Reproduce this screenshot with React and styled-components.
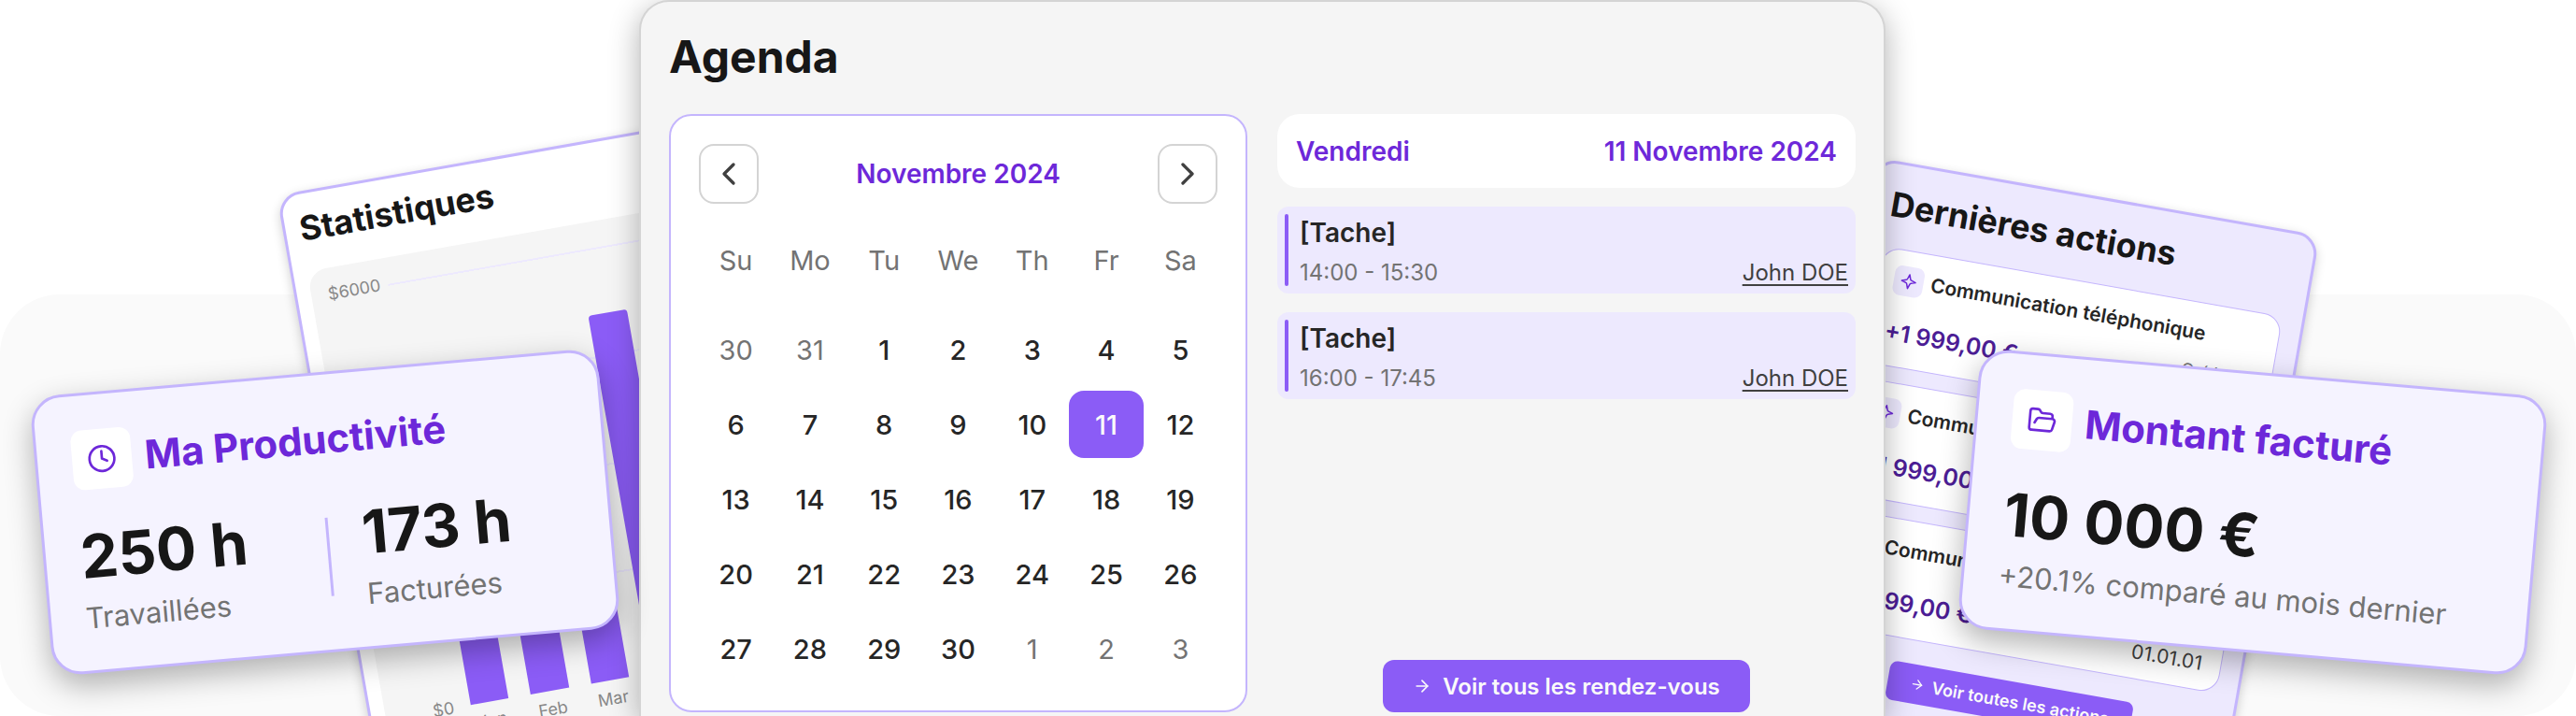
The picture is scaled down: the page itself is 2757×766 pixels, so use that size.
import React from "react";
import styled, { createGlobalStyle } from "styled-components";
import {
  ArrowRight,
  ChevronLeft,
  ChevronRight,
  Clock,
  FolderOpen,
} from "lucide-react";

const GlobalStyle = createGlobalStyle`
  *, *::before, *::after {
    box-sizing: border-box;
  }
  body {
    margin: 0;
    background: #fff;
    color: #171717;
    font-family: Inter, "Liberation Sans", sans-serif;
  }
  h1, h2, h3, p, ul {
    margin: 0;
    padding: 0;
  }
  button {
    font-family: inherit;
    cursor: pointer;
  }
`;

const Stage = styled.main`
  position: relative;
  display: grid;
  grid-template-columns: 684fr 1334fr 739fr;
  overflow: hidden;
`;

const Backdrop = styled.div`
  position: absolute;
  inset: 315px 0 0;
  border-radius: 64px;
  background: #fafafa;
`;

const Side = styled.div`
  position: relative;
`;

/* Main agenda panel */

const Panel = styled.section`
  position: relative;
  z-index: 1;
  padding: 0 30px 4px;
  border: 2px solid #d4d4d4;
  border-bottom: 0;
  border-radius: 32px 32px 0 0;
  background: #f5f5f5;
  box-shadow: 0 8px 32px rgba(0, 0, 0, 0.3);
`;

const PanelTitle = styled.h1`
  padding: 30px 0 32px;
  font-size: 48px;
  line-height: 58px;
  font-weight: 700;
`;

const Columns = styled.div`
  display: grid;
  grid-template-columns: 1fr 1fr;
  gap: 32px;
`;

const Calendar = styled.div`
  padding: 30px;
  border: 2px solid #c4b5fd;
  border-radius: 24px;
  background: #fff;
`;

const MonthBar = styled.div`
  display: flex;
  align-items: center;
  justify-content: space-between;
`;

const MonthName = styled.h2`
  color: #6d28d9;
  font-size: 28px;
  line-height: 34px;
  font-weight: 600;
`;

const NavButton = styled.button`
  display: flex;
  align-items: center;
  justify-content: center;
  width: 64px;
  height: 64px;
  padding: 0;
  border: 2px solid #d4d4d4;
  border-radius: 16px;
  background: #fff;
  color: #404040;
`;

const MonthTable = styled.table`
  width: 100%;
  margin-top: 32px;
  border-collapse: collapse;
  table-layout: fixed;
`;

const WeekDay = styled.th`
  height: 56px;
  padding: 0;
  color: #737373;
  font-size: 29px;
  font-weight: 400;
`;

const DayCell = styled.td`
  height: 80px;
  padding: 8px 0 0;

  tr:first-child > & {
    height: 104px;
    padding-top: 32px;
  }
`;

const Day = styled.button`
  display: block;
  width: 100%;
  height: 72px;
  padding: 0;
  border: 0;
  border-radius: 16px;
  background: ${({ $selected }) => ($selected ? "#8b5cf6" : "transparent")};
  color: ${({ $selected, $outside }) =>
    $selected ? "#fafafa" : $outside ? "#737373" : "#262626"};
  font-size: 29px;
  font-weight: ${({ $outside }) => ($outside ? 400 : 500)};
`;

const DayPlan = styled.div`
  display: flex;
  flex-direction: column;
  gap: 20px;
`;

const DateBar = styled.div`
  display: flex;
  justify-content: space-between;
  padding: 23px 20px 22px;
  border-radius: 24px;
  background: #fff;
  color: #6d28d9;
  font-size: 28px;
  line-height: 34px;
  font-weight: 600;
`;

const Task = styled.article`
  display: flex;
  gap: 12px;
  padding: 8px;
  border-radius: 12px;
  background: #ede9fe;

  &::before {
    content: "";
    width: 4px;
    border-radius: 2px;
    background: #8b5cf6;
  }
`;

const TaskBody = styled.div`
  flex: 1;
`;

const TaskName = styled.h3`
  color: #262626;
  font-size: 28px;
  line-height: 40px;
  font-weight: 600;
`;

const TaskMeta = styled.div`
  display: flex;
  justify-content: space-between;
  margin-top: 8px;
  color: #737373;
  font-size: 24px;
  line-height: 29px;
`;

const Person = styled.a`
  color: #404040;
  text-decoration: underline;
  text-decoration-thickness: 2px;
  text-underline-offset: 4px;
`;

const PrimaryButton = styled.button`
  display: flex;
  align-items: center;
  align-self: center;
  gap: ${({ $small }) => ($small ? 8 : 12)}px;
  height: ${({ $small }) => ($small ? 42 : 56)}px;
  margin-top: auto;
  padding: 0 ${({ $small }) => ($small ? 24 : 32)}px;
  border: 0;
  border-radius: ${({ $small }) => ($small ? 8 : 12)}px;
  background: #8b5cf6;
  color: #fafafa;
  font-size: ${({ $small }) => ($small ? 18 : 24)}px;
  font-weight: 600;
  white-space: nowrap;
`;

/* Tilted cards around the panel */

const SummaryCard = styled.section`
  position: absolute;
  z-index: 2;
  top: 398px;
  ${({ $side }) => ($side === "left" ? "left: 43px" : "right: 41px")};
  width: 610px;
  padding: 37px;
  border: 3px solid #c4b5fd;
  border-radius: 32px;
  background: #f5f3ff;
  box-shadow: 0 12px 32px rgba(0, 0, 0, 0.3);
  transform: rotate(${({ $side }) => ($side === "left" ? -5 : 5)}deg);
`;

const SummaryHead = styled.div`
  display: flex;
  align-items: center;
  gap: 14px;
  margin-bottom: 32px;
`;

const SummaryIcon = styled.span`
  display: flex;
  align-items: center;
  justify-content: center;
  width: 64px;
  height: 64px;
  border-radius: 12px;
  background: #fff;
  color: #6d28d9;
`;

const SummaryTitle = styled.h2`
  color: #6d28d9;
  font-size: 42px;
  line-height: 48px;
  font-weight: 700;
`;

const Figures = styled.div`
  display: grid;
  grid-template-columns: 1fr 3px 1fr;
  align-items: center;
  gap: 36px;
`;

const Divider = styled.div`
  height: 84px;
  background: #c4b5fd;
`;

const Amount = styled.p`
  font-size: 64px;
  line-height: 77px;
  font-weight: 700;
`;

const Caption = styled.p`
  margin-top: 8px;
  color: #737373;
  font-size: 31px;
  line-height: 39px;
  white-space: nowrap;
`;

const TiltedCard = styled.section`
  position: absolute;
  border: 3px solid #c4b5fd;
  border-radius: 24px;
  box-shadow: 0 4px 12px rgba(0, 0, 0, 0.2);
`;

const StatsCard = styled(TiltedCard)`
  top: 209px;
  left: 296px;
  width: 916px;
  padding: 15px;
  background: #fff;
  transform: rotate(-10deg);
  transform-origin: 0 0;
`;

const ActionsCard = styled(TiltedCard)`
  top: 252px;
  right: 274px;
  display: flex;
  flex-direction: column;
  width: 482px;
  padding: 21px;
  background: #ede9fe;
  transform: rotate(10deg);
  transform-origin: 100% 0;
`;

const CardTitle = styled.h2`
  margin-bottom: 24px;
  font-size: 36px;
  line-height: 44px;
  font-weight: 700;
`;

const Chart = styled.div`
  display: grid;
  grid-template-columns: 56px 1fr;
  column-gap: 9px;
  padding: 18px;
  border-radius: 20px;
  background: #f5f5f5;
  color: #888;
  font-size: 18px;
  line-height: 20px;
`;

const YAxis = styled.div`
  display: flex;
  flex-direction: column;
  justify-content: space-between;
  height: 479px;
  text-align: right;
`;

const Plot = styled.div`
  display: flex;
  align-items: flex-end;
  gap: 24px;
  height: 459px;
  margin: 10px 0;
  padding: 0 9px;
  background: repeating-linear-gradient(
    #ede9fe 0 2px,
    transparent 2px 115px
  );
`;

const Bar = styled.div`
  flex: 1;
  border-radius: 4px 4px 0 0;
  background: #8b5cf6;
`;

const XAxis = styled.div`
  grid-column: 2;
  display: flex;
  gap: 24px;
  padding: 0 9px;
  text-align: center;

  span {
    flex: 1;
    width: 0;
  }
`;

const ActionList = styled.ul`
  display: flex;
  flex-direction: column;
  gap: 16px;
  margin-bottom: 25px;
  list-style: none;
`;

const Action = styled.li`
  display: grid;
  gap: 14px;
  padding: 16px;
  border: 1px solid #c4b5fd;
  border-radius: 20px;
  background: #fff;
`;

const ActionHead = styled.div`
  display: flex;
  align-items: center;
  gap: 8px;
  color: #262626;
  font-size: 21px;
  line-height: 28px;
  font-weight: 600;
  white-space: nowrap;
`;

const ActionIcon = styled.span`
  display: flex;
  align-items: center;
  justify-content: center;
  width: 32px;
  height: 32px;
  border-radius: 8px;
  background: #ede9fe;
  color: #6d28d9;
`;

const ActionFoot = styled.div`
  display: flex;
  align-items: flex-end;
  justify-content: space-between;
`;

const ActionAmount = styled.strong`
  color: #4c1d95;
  font-size: 25px;
  line-height: 40px;
  font-weight: 600;
`;

const ActionDate = styled.p`
  padding-right: 4px;
  color: #404040;
  font-size: 21px;
  line-height: 24px;

  span {
    display: block;
    color: #737373;
    font-size: 18px;
    line-height: 22px;
  }
`;

const WEEK_DAYS = ["Su", "Mo", "Tu", "We", "Th", "Fr", "Sa"];

const WEEKS = [
  [30, 31, 1, 2, 3, 4, 5],
  [6, 7, 8, 9, 10, 11, 12],
  [13, 14, 15, 16, 17, 18, 19],
  [20, 21, 22, 23, 24, 25, 26],
  [27, 28, 29, 30, 1, 2, 3],
];

const TASKS = [
  { id: 1, time: "14:00 - 15:30" },
  { id: 2, time: "16:00 - 17:45" },
];

const TICKS = ["$6000", "$4500", "$3000", "$1500", "$0"];

const REVENUE = [
  ["Jan", 1600],
  ["Feb", 1900],
  ["Mar", 2100],
  ["Apr", 5070],
  ["May", 2400],
  ["Jun", 3200],
  ["Jul", 4100],
  ["Aug", 2800],
  ["Sep", 3600],
  ["Oct", 1900],
  ["Nov", 4400],
  ["Dec", 3000],
];

const isOutside = (week, day) =>
  (week === 0 && day > 7) || (week === WEEKS.length - 1 && day < 7);

const Sparkle = () => (
  <svg width="18" height="18" viewBox="0 0 18 18" fill="none" aria-hidden="true">
    <path
      d="M9 1.5 10.6 6.2Q10.9 7.1 11.8 7.4L16.5 9 11.8 10.6Q10.9 10.9 10.6 11.8L9 16.5 7.4 11.8Q7.1 10.9 6.2 10.6L1.5 9 6.2 7.4Q7.1 7.1 7.4 6.2Z"
      stroke="currentColor"
      strokeWidth="1.5"
      strokeLinejoin="round"
    />
  </svg>
);

const Stats = () => (
  <StatsCard>
    <CardTitle>Statistiques</CardTitle>
    <Chart>
      <YAxis>
        {TICKS.map((tick) => (
          <span key={tick}>{tick}</span>
        ))}
      </YAxis>
      <Plot>
        {REVENUE.map(([month, value]) => (
          <Bar key={month} style={{ height: `${(value / 6000) * 100}%` }} />
        ))}
      </Plot>
      <XAxis>
        {REVENUE.map(([month]) => (
          <span key={month}>{month}</span>
        ))}
      </XAxis>
    </Chart>
  </StatsCard>
);

const Agenda = () => (
  <Panel>
    <PanelTitle>Agenda</PanelTitle>
    <Columns>
      <Calendar>
        <MonthBar>
          <NavButton aria-label="Mois précédent">
            <ChevronLeft size={40} />
          </NavButton>
          <MonthName>Novembre 2024</MonthName>
          <NavButton aria-label="Mois suivant">
            <ChevronRight size={40} />
          </NavButton>
        </MonthBar>
        <MonthTable>
          <thead>
            <tr>
              {WEEK_DAYS.map((name) => (
                <WeekDay key={name} scope="col">
                  {name}
                </WeekDay>
              ))}
            </tr>
          </thead>
          <tbody>
            {WEEKS.map((days, week) => (
              <tr key={week}>
                {days.map((day) => (
                  <DayCell key={day}>
                    <Day $outside={isOutside(week, day)} $selected={day === 11}>
                      {day}
                    </Day>
                  </DayCell>
                ))}
              </tr>
            ))}
          </tbody>
        </MonthTable>
      </Calendar>
      <DayPlan>
        <DateBar>
          <span>Vendredi</span>
          <span>11 Novembre 2024</span>
        </DateBar>
        {TASKS.map(({ id, time }) => (
          <Task key={id}>
            <TaskBody>
              <TaskName>[Tache]</TaskName>
              <TaskMeta>
                <span>{time}</span>
                <Person href="#john-doe">John DOE</Person>
              </TaskMeta>
            </TaskBody>
          </Task>
        ))}
        <PrimaryButton>
          <ArrowRight size={20} />
          Voir tous les rendez-vous
        </PrimaryButton>
      </DayPlan>
    </Columns>
  </Panel>
);

const LatestActions = () => (
  <ActionsCard>
    <CardTitle>Dernières actions</CardTitle>
    <ActionList>
      {[1, 2, 3].map((id) => (
        <Action key={id}>
          <ActionHead>
            <ActionIcon>
              <Sparkle />
            </ActionIcon>
            Communication téléphonique
          </ActionHead>
          <ActionFoot>
            <ActionAmount>+1 999,00 €</ActionAmount>
            <ActionDate>
              <span>Créé le</span>
              01.01.01
            </ActionDate>
          </ActionFoot>
        </Action>
      ))}
    </ActionList>
    <PrimaryButton $small>
      <ArrowRight size={16} />
      Voir toutes les actions
    </PrimaryButton>
  </ActionsCard>
);

const App = () => (
  <>
    <GlobalStyle />
    <Stage>
      <Backdrop />
      <Side>
        <Stats />
        <SummaryCard $side="left">
          <SummaryHead>
            <SummaryIcon>
              <Clock size={32} />
            </SummaryIcon>
            <SummaryTitle>Ma Productivité</SummaryTitle>
          </SummaryHead>
          <Figures>
            <div>
              <Amount>250 h</Amount>
              <Caption>Travaillées</Caption>
            </div>
            <Divider />
            <div>
              <Amount>173 h</Amount>
              <Caption>Facturées</Caption>
            </div>
          </Figures>
        </SummaryCard>
      </Side>
      <Agenda />
      <Side>
        <LatestActions />
        <SummaryCard $side="right">
          <SummaryHead>
            <SummaryIcon>
              <FolderOpen size={32} />
            </SummaryIcon>
            <SummaryTitle>Montant facturé</SummaryTitle>
          </SummaryHead>
          <Amount>10 000 €</Amount>
          <Caption>+20.1% comparé au mois dernier</Caption>
        </SummaryCard>
      </Side>
    </Stage>
  </>
);

export default App;
